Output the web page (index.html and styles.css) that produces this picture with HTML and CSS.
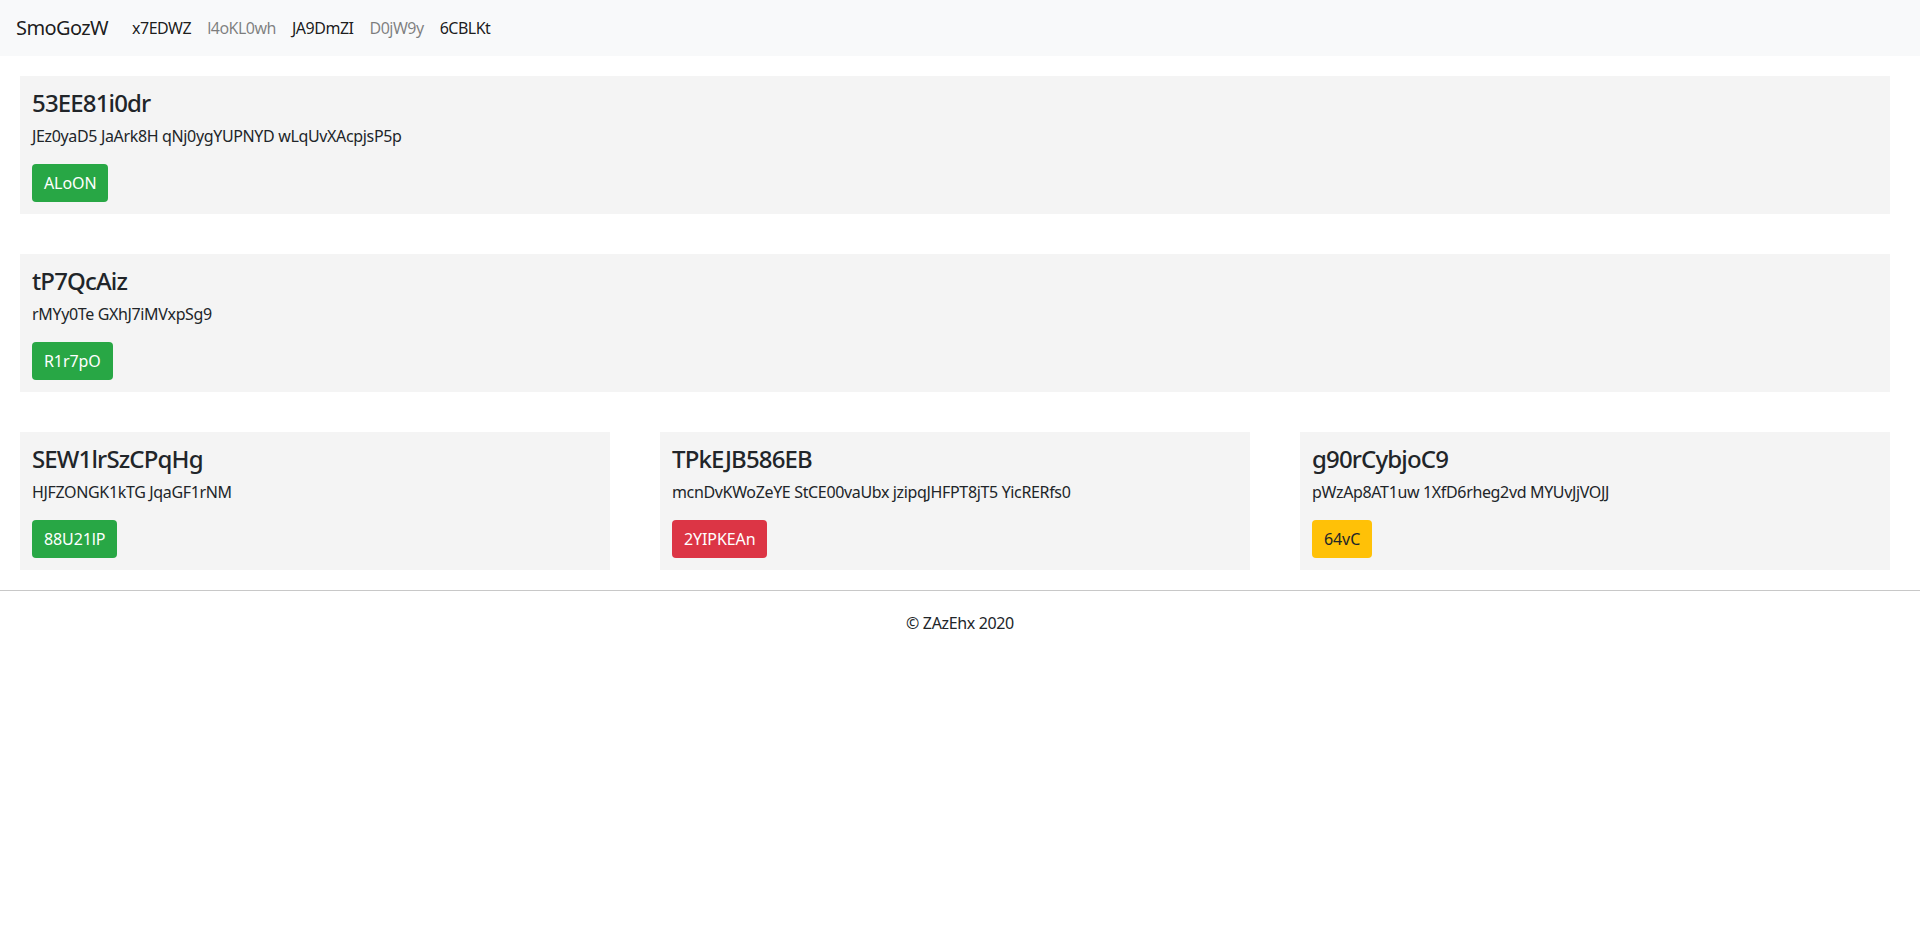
FILE: index.html
```html
<!DOCTYPE html>
<html lang="en">
<head>
<meta charset="utf-8">
<title>SmoGozW</title>
<link rel="stylesheet" href="styles.css">
</head>
<body>
<nav class="navbar">
  <a class="brand" href="#">SmoGozW</a>
  <ul class="nav">
    <li><a class="nav-link dark" href="#">x7EDWZ</a></li>
    <li><a class="nav-link" href="#">l4oKL0wh</a></li>
    <li><a class="nav-link dark" href="#">JA9DmZI</a></li>
    <li><a class="nav-link" href="#">D0jW9y</a></li>
    <li><a class="nav-link dark" href="#">6CBLKt</a></li>
  </ul>
</nav>
<main class="main">
  <section class="card">
    <h4 class="card-title">53EE81i0dr</h4>
    <p class="card-text">JEz0yaD5 JaArk8H qNj0ygYUPNYD wLqUvXAcpjsP5p</p>
    <a class="btn btn-success" href="#">ALoON</a>
  </section>
  <section class="card">
    <h4 class="card-title">tP7QcAiz</h4>
    <p class="card-text">rMYy0Te GXhJ7iMVxpSg9</p>
    <a class="btn btn-success" href="#">R1r7pO</a>
  </section>
  <div class="row">
    <section class="card">
      <h4 class="card-title">SEW1lrSzCPqHg</h4>
      <p class="card-text">HJFZONGK1kTG JqaGF1rNM</p>
      <a class="btn btn-success" href="#">88U21lP</a>
    </section>
    <section class="card">
      <h4 class="card-title">TPkEJB586EB</h4>
      <p class="card-text">mcnDvKWoZeYE StCE00vaUbx jzipqJHFPT8jT5 YicRERfs0</p>
      <a class="btn btn-danger" href="#">2YIPKEAn</a>
    </section>
    <section class="card">
      <h4 class="card-title">g90rCybjoC9</h4>
      <p class="card-text">pWzAp8AT1uw 1XfD6rheg2vd MYUvJjVOJJ</p>
      <a class="btn btn-warning" href="#">64vC</a>
    </section>
  </div>
</main>
<hr class="rule">
<footer class="footer">© ZAzEhx 2020</footer>
</body>
</html>
```
FILE: styles.css
```css
* { box-sizing: border-box; }
html, body { margin: 0; padding: 0; }
body {
  font-family: "Noto Sans", "Open Sans", sans-serif;
  font-size: 16px;
  line-height: 1.5;
  letter-spacing: -0.35px;
  color: #212529;
  background: #fff;
}
a { text-decoration: none; }
.navbar {
  display: flex;
  align-items: center;
  height: 56px;
  padding: 8px 16px;
  background: #f8f9fa;
}
.brand {
  font-size: 20px;
  line-height: 30px;
  padding: 5px 0;
  margin-right: 16px;
  letter-spacing: -0.6px;
  color: rgba(0,0,0,.9);
}
.nav {
  display: flex;
  list-style: none;
  margin: 0;
  padding: 0;
}
.nav-link {
  display: block;
  padding: 8px;
  letter-spacing: -0.5px;
  color: rgba(0,0,0,.5);
}
.nav-link.dark { color: rgba(0,0,0,.9); }
.main {
  display: flex;
  flex-direction: column;
  gap: 40px;
  padding: 20px 30px 0 20px;
}
.row {
  display: grid;
  grid-template-columns: repeat(3, 1fr);
  gap: 50px;
}
.card {
  display: flex;
  flex-direction: column;
  align-items: flex-start;
  background: #f4f4f4;
  padding: 12px;
}
.card-title {
  margin: 0 0 8px;
  padding-top: 1px;
  font-size: 24px;
  font-weight: 500;
  line-height: 27px;
  letter-spacing: -0.85px;
}
.card-text {
  margin: 0 0 16px;
}
.btn {
  display: block;
  padding: 7px 12px 7px;
  font-size: 16px;
  line-height: 24px;
  height: 38px;
  border-radius: 4px;
  letter-spacing: -0.1px;
  color: #fff;
}
.btn-success { background: #28a745; }
.btn-danger { background: #dc3545; }
.btn-warning { background: #ffc107; color: #212529; }
.rule {
  margin: 20px 0 0;
  border: 0;
  border-top: 1px solid #c8c8c8;
}
.footer {
  text-align: center;
  padding: 20px 0;
}
```
